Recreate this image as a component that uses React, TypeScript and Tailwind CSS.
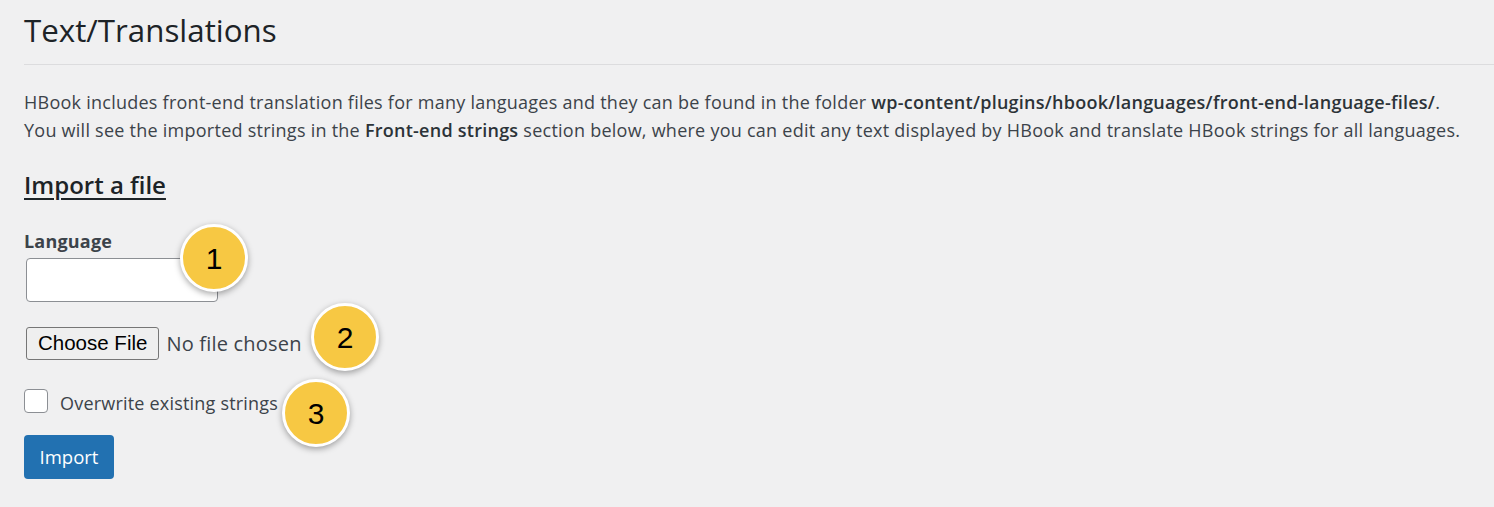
export default function App() {
  const badge =
    "absolute flex items-center justify-center w-[68px] h-[68px] rounded-full bg-[#f7c843] border-[3px] border-white shadow-[0_2px_6px_rgba(0,0,0,0.35)] text-[30px] text-black font-['Liberation_Sans',Arial,sans-serif]";
  return (
    <div className="w-[1494px] h-[507px] bg-[#f0f0f1] overflow-hidden font-['Open_Sans',sans-serif] text-[#3c434a] relative">
      <div className="pl-[24px]">
        <h1 className="pt-[8px] text-[31.3px] leading-[44px] text-[#1d2327]">Text/Translations</h1>
        <div className="mt-[12px] h-px bg-[#dcdcde]" />
        <p className="mt-[23px] text-[18px] leading-[28px] tracking-[0.25px] whitespace-nowrap">
          HBook includes front-end translation files for many languages and they can be found in the folder{" "}
          <b className="font-semibold text-[#2c3338]">wp-content/plugins/hbook/languages/front-end-language-files/</b>.
          <br />
          You will see the imported strings in the <b className="font-semibold text-[#2c3338]">Front-end strings</b>{" "}
          section below, where you can edit any text displayed by HBook and translate HBook strings for all languages.
        </p>
        <h2 className="mt-[26px] text-[24px] leading-[30px] text-[#1d2327] underline underline-offset-[4px] decoration-[2px] font-semibold">
          Import a file
        </h2>
        <div className="mt-[30px] text-[18px] leading-[22px] font-bold text-[#3c434a] tracking-[0.2px]">Language</div>
        <div className="mt-[6px] ml-[2px] w-[192px] h-[44px] bg-white border border-[#8c8f94] rounded-[4px]" />
        <div className="mt-[25px] ml-[2px] flex items-center gap-[7px]">
          <div className="h-[33px] px-[11px] flex items-center bg-[#efefef] border border-[#767676] rounded-[3px] text-[20.5px] text-black font-['Liberation_Sans',Arial,sans-serif]">
            Choose File
          </div>
          <span className="text-[20px] text-[#3c434a] tracking-[0.2px]">No file chosen</span>
        </div>
        <div className="mt-[29px] flex items-center gap-[12px]">
          <div className="w-[24px] h-[24px] bg-white border border-[#8c8f94] rounded-[4px]" />
          <span className="text-[18px] leading-[24px] text-[#3c434a] tracking-[0.2px] relative top-[2px]">Overwrite existing strings</span>
        </div>
        <div className="mt-[22px] w-[90px] h-[44px] bg-[#2271b1] rounded-[4px] flex items-center justify-center text-white text-[18.5px]">
          Import
        </div>
      </div>
      <div className={badge + " left-[180px] top-[224px]"}>1</div>
      <div className={badge + " left-[311px] top-[303px]"}>2</div>
      <div className={badge + " left-[282px] top-[379px]"}>3</div>
    </div>
  );
}
